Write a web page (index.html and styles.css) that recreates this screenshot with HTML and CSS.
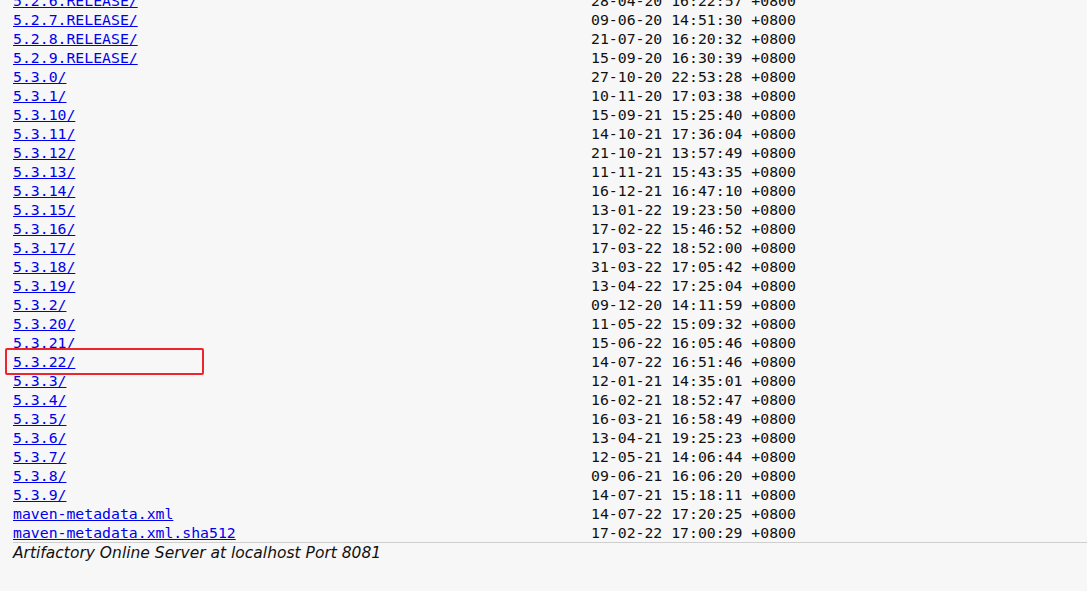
FILE: index.html
```html
<!DOCTYPE html>
<html>
<head>
<meta charset="utf-8">
<title>Index of libs-release</title>
<link rel="stylesheet" href="styles.css">
</head>
<body>
<div class="listing">
  <div class="row"><a class="name" href="#">5.2.6.RELEASE/</a><span class="date">28-04-20 16:22:57 +0800</span></div>
  <div class="row"><a class="name" href="#">5.2.7.RELEASE/</a><span class="date">09-06-20 14:51:30 +0800</span></div>
  <div class="row"><a class="name" href="#">5.2.8.RELEASE/</a><span class="date">21-07-20 16:20:32 +0800</span></div>
  <div class="row"><a class="name" href="#">5.2.9.RELEASE/</a><span class="date">15-09-20 16:30:39 +0800</span></div>
  <div class="row"><a class="name" href="#">5.3.0/</a><span class="date">27-10-20 22:53:28 +0800</span></div>
  <div class="row"><a class="name" href="#">5.3.1/</a><span class="date">10-11-20 17:03:38 +0800</span></div>
  <div class="row"><a class="name" href="#">5.3.10/</a><span class="date">15-09-21 15:25:40 +0800</span></div>
  <div class="row"><a class="name" href="#">5.3.11/</a><span class="date">14-10-21 17:36:04 +0800</span></div>
  <div class="row"><a class="name" href="#">5.3.12/</a><span class="date">21-10-21 13:57:49 +0800</span></div>
  <div class="row"><a class="name" href="#">5.3.13/</a><span class="date">11-11-21 15:43:35 +0800</span></div>
  <div class="row"><a class="name" href="#">5.3.14/</a><span class="date">16-12-21 16:47:10 +0800</span></div>
  <div class="row"><a class="name" href="#">5.3.15/</a><span class="date">13-01-22 19:23:50 +0800</span></div>
  <div class="row"><a class="name" href="#">5.3.16/</a><span class="date">17-02-22 15:46:52 +0800</span></div>
  <div class="row"><a class="name" href="#">5.3.17/</a><span class="date">17-03-22 18:52:00 +0800</span></div>
  <div class="row"><a class="name" href="#">5.3.18/</a><span class="date">31-03-22 17:05:42 +0800</span></div>
  <div class="row"><a class="name" href="#">5.3.19/</a><span class="date">13-04-22 17:25:04 +0800</span></div>
  <div class="row"><a class="name" href="#">5.3.2/</a><span class="date">09-12-20 14:11:59 +0800</span></div>
  <div class="row"><a class="name" href="#">5.3.20/</a><span class="date">11-05-22 15:09:32 +0800</span></div>
  <div class="row"><a class="name" href="#">5.3.21/</a><span class="date">15-06-22 16:05:46 +0800</span></div>
  <div class="row marked"><a class="name" href="#">5.3.22/</a><span class="date">14-07-22 16:51:46 +0800</span><span class="highlight"></span></div>
  <div class="row"><a class="name" href="#">5.3.3/</a><span class="date">12-01-21 14:35:01 +0800</span></div>
  <div class="row"><a class="name" href="#">5.3.4/</a><span class="date">16-02-21 18:52:47 +0800</span></div>
  <div class="row"><a class="name" href="#">5.3.5/</a><span class="date">16-03-21 16:58:49 +0800</span></div>
  <div class="row"><a class="name" href="#">5.3.6/</a><span class="date">13-04-21 19:25:23 +0800</span></div>
  <div class="row"><a class="name" href="#">5.3.7/</a><span class="date">12-05-21 14:06:44 +0800</span></div>
  <div class="row"><a class="name" href="#">5.3.8/</a><span class="date">09-06-21 16:06:20 +0800</span></div>
  <div class="row"><a class="name" href="#">5.3.9/</a><span class="date">14-07-21 15:18:11 +0800</span></div>
  <div class="row"><a class="name" href="#">maven-metadata.xml</a><span class="date">14-07-22 17:20:25 +0800</span></div>
  <div class="row"><a class="name" href="#">maven-metadata.xml.sha512</a><span class="date">17-02-22 17:00:29 +0800</span></div>
</div>
<div class="footer">
  <address class="server">Artifactory Online Server at localhost Port 8081</address>
</div>
</body>
</html>
```

FILE: styles.css
```css
html, body {
  margin: 0;
  padding: 0;
  background: #f7f7f7;
}

body {
  height: 591px;
  overflow: hidden;
}

.listing {
  margin-top: -9px;
  padding-left: 13px;
  display: flex;
  flex-direction: column;
  font-family: "DejaVu Sans Mono", "Liberation Mono", monospace;
  font-size: 14.8px;
}

.row {
  position: relative;
  display: flex;
  height: 19px;
  line-height: 19px;
  white-space: pre;
}

.name {
  width: 578px;
  flex: none;
  color: #0000ee;
  text-decoration: underline;
}

.date {
  color: #111;
}

.highlight {
  position: absolute;
  left: -8px;
  top: -4px;
  width: 195px;
  height: 23px;
  border: 2px solid #f0242c;
  border-radius: 2px;
}

.footer {
  margin-left: 13px;
  border-top: 1px solid #cfcfcf;
}

.server {
  font-family: "DejaVu Sans", "Noto Sans", sans-serif;
  font-style: italic;
  font-size: 15.5px;
  line-height: 21px;
  color: #111;
}
```
